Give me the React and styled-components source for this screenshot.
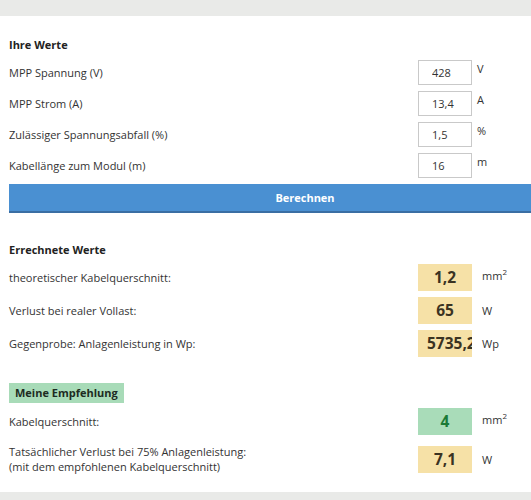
import styled, { createGlobalStyle } from 'styled-components';

const Global = createGlobalStyle`
  html, body {
    margin: 0;
    padding: 0;
    background: #e9eae8;
    overflow: hidden;
  }
  body {
    font-family: "Open Sans", "Liberation Sans", sans-serif;
    color: #333;
  }
`;

const Page = styled.div`
  padding: 16px 0 12px;
  width: 531px;
  overflow: hidden;
`;

const Panel = styled.div`
  background: #fff;
  width: 640px;
  padding: 21px 0 18px 9px;
  box-sizing: border-box;
`;

const Heading = styled.div`
  font-size: 11px;
  font-weight: 700;
  line-height: 16px;
  color: #222;
  margin: ${(p) => p.$mt || 0}px 0 ${(p) => p.$mb || 0}px;
`;

const Tag = styled.div`
  width: fit-content;
  background: #a8dbb8;
  font-size: 11px;
  font-weight: 700;
  line-height: 20px;
  padding: 0 6px;
  color: #1d2b22;
  margin: 26px 0 5px;
`;

const Row = styled.div`
  display: grid;
  grid-template-columns: 404px 54px auto;
  column-gap: 5px;
  align-items: center;
  margin-bottom: ${(p) => p.$gap ?? 6}px;
`;

const Label = styled.div`
  font-size: 11px;
  line-height: 15px;
  color: #333;
`;

const Field = styled.input`
  box-sizing: border-box;
  width: 54px;
  height: 25px;
  border: 1px solid #c9c9c9;
  background: #fff;
  font-family: inherit;
  font-size: 11px;
  color: #333;
  padding: 0 0 0 13px;
  outline: none;
`;

const Result = styled.div`
  box-sizing: border-box;
  width: 54px;
  height: 27px;
  background: ${(p) => (p.$green ? '#a9dcb9' : '#f6e1a7')};
  color: ${(p) => (p.$green ? '#1b7a36' : '#3b3322')};
  font-size: 15.5px;
  font-weight: 700;
  line-height: 27px;
  text-align: center;
  white-space: nowrap;
  overflow: hidden;
  padding: 0 9px;
`;

const Unit = styled.div`
  font-size: 11px;
  line-height: 15px;
  color: #333;
  align-self: ${(p) => (p.$top ? 'start' : 'center')};
  padding-top: ${(p) => (p.$top ? 1 : 0)}px;
  padding-left: ${(p) => (p.$top ? 0 : 5)}px;
  margin-top: ${(p) => (p.$raise ? -4 : 0)}px;
  sup {
    font-size: 8px;
    line-height: 0;
  }
`;

const Button = styled.button`
  display: block;
  width: 592px;
  height: 29px;
  margin-top: 6px;
  border: none;
  border-bottom: 2px solid #3a6ea3;
  background: #4a90d2;
  color: #fff;
  font-family: inherit;
  font-size: 11px;
  font-weight: 700;
  cursor: pointer;
`;

const inputs = [
  { label: 'MPP Spannung (V)', value: '428', unit: 'V' },
  { label: 'MPP Strom (A)', value: '13,4', unit: 'A' },
  { label: 'Zulässiger Spannungsabfall (%)', value: '1,5', unit: '%' },
  { label: 'Kabellänge zum Modul (m)', value: '16', unit: 'm' },
];

const results = [
  { label: 'theoretischer Kabelquerschnitt:', value: '1,2', unit: 'mm', sq: true },
  { label: 'Verlust bei realer Vollast:', value: '65', unit: 'W' },
  { label: 'Gegenprobe: Anlagenleistung in Wp:', value: '5735,25', unit: 'Wp' },
];

const UnitText = ({ unit, sq }) => (
  <>
    {unit}
    {sq && <sup>2</sup>}
  </>
);

export default function App() {
  return (
    <Page>
      <Global />
      <Panel>
        <Heading $mb={7}>Ihre Werte</Heading>
        {inputs.map((r) => (
          <Row key={r.label}>
            <Label>{r.label}</Label>
            <Field defaultValue={r.value} />
            <Unit $top>{r.unit}</Unit>
          </Row>
        ))}
        <Button>Berechnen</Button>

        <Heading $mt={29} $mb={6}>Errechnete Werte</Heading>
        {results.map((r) => (
          <Row key={r.label}>
            <Label>{r.label}</Label>
            <Result>{r.value}</Result>
            <Unit $raise={r.sq}>
              <UnitText unit={r.unit} sq={r.sq} />
            </Unit>
          </Row>
        ))}

        <Tag>Meine Empfehlung</Tag>
        <Row $gap={9}>
          <Label>Kabelquerschnitt:</Label>
          <Result $green>4</Result>
          <Unit $raise>
            <UnitText unit="mm" sq />
          </Unit>
        </Row>
        <Row $gap={0}>
          <Label>
            Tatsächlicher Verlust bei 75% Anlagenleistung:
            <br />
            (mit dem empfohlenen Kabelquerschnitt)
          </Label>
          <Result>7,1</Result>
          <Unit>W</Unit>
        </Row>
      </Panel>
    </Page>
  );
}
